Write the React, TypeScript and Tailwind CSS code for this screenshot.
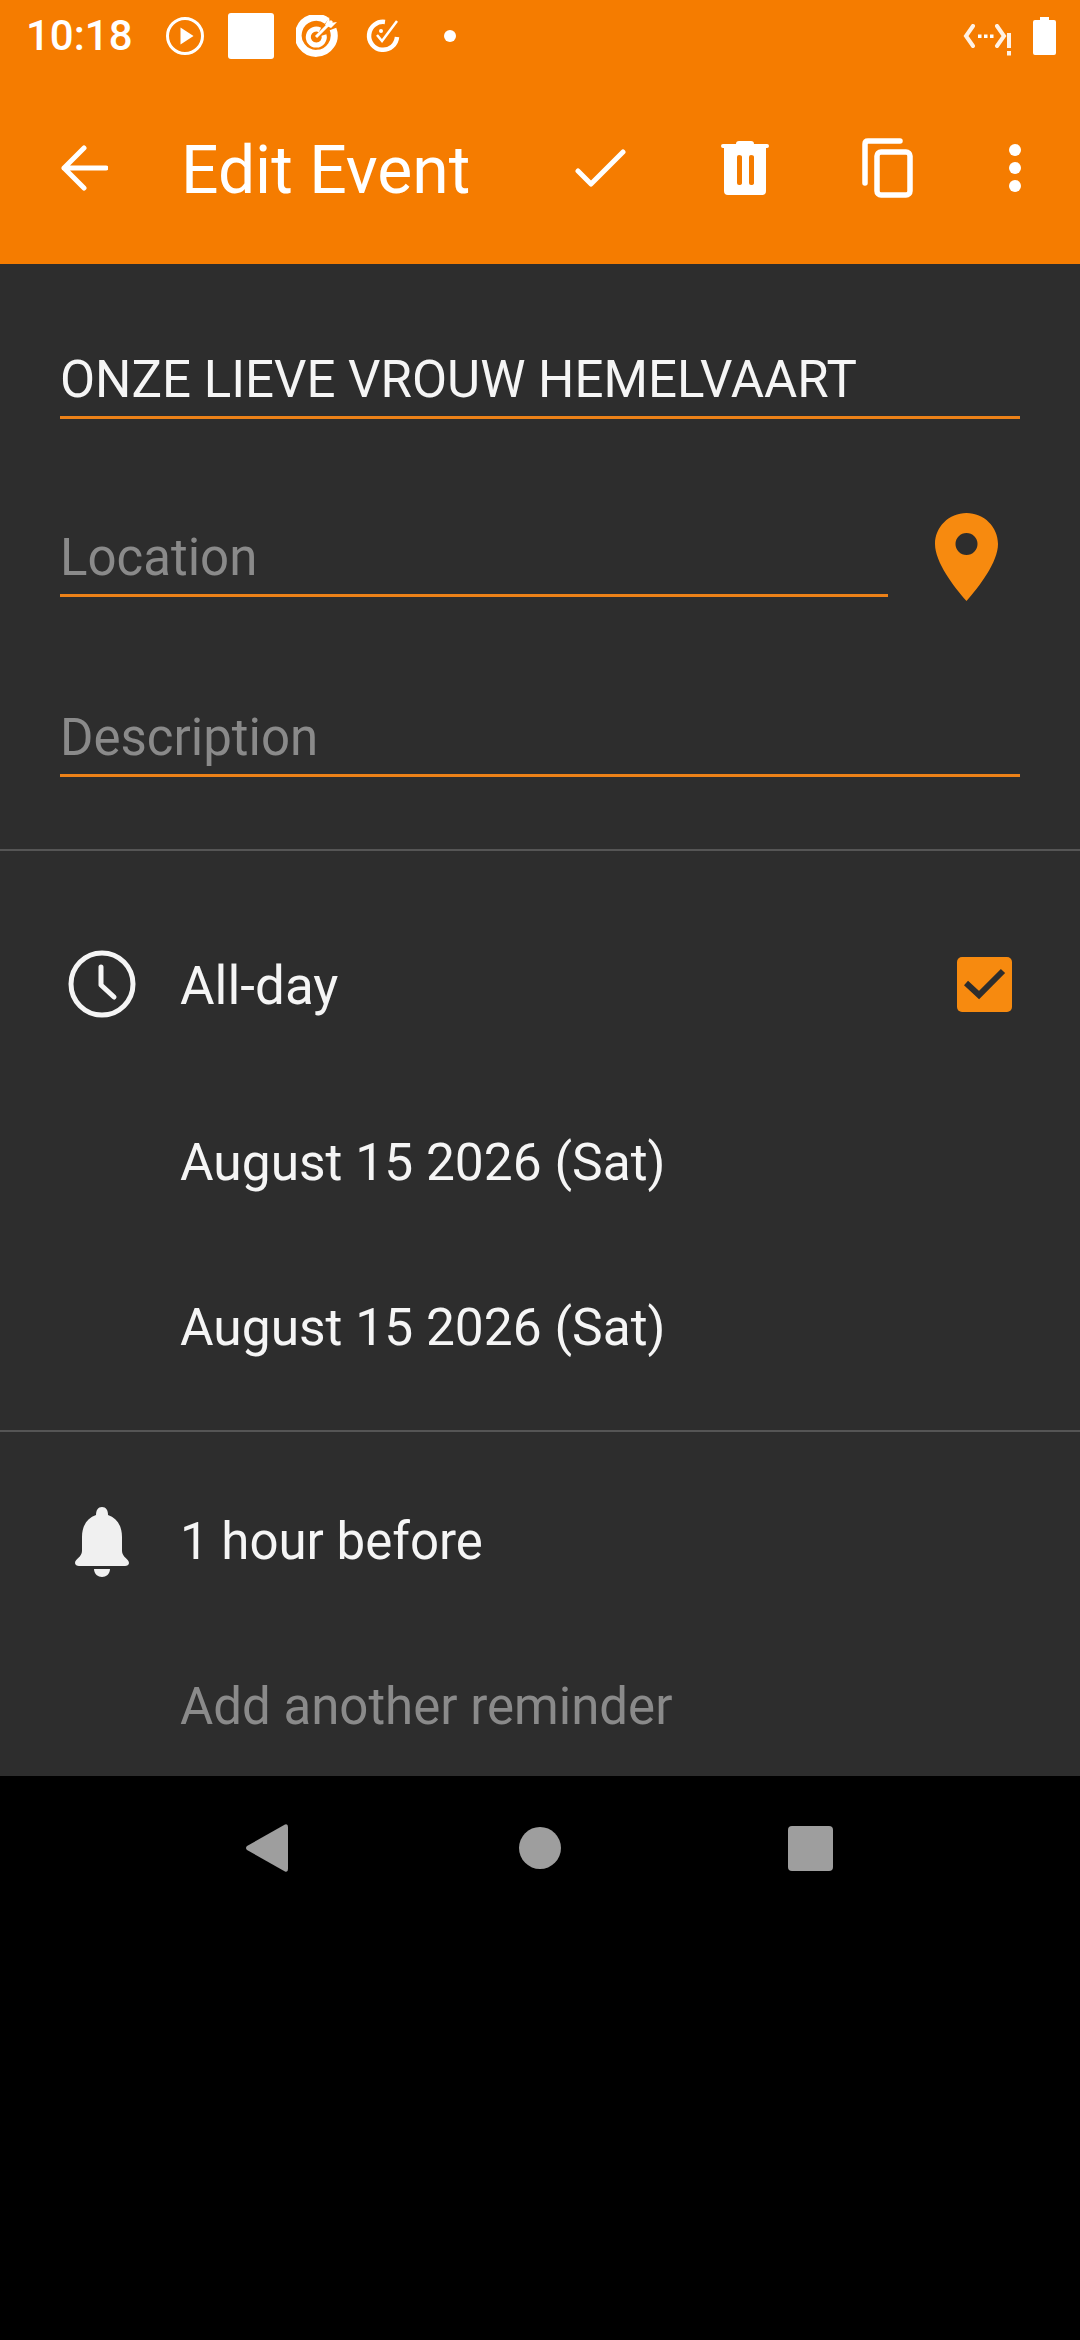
/** Edit Event screen, dark theme with orange toolbar. */
function StatusBar() {
  return (
    <div className="flex h-[72px] items-center pl-[26px] pr-[24px]">
      <span className="w-[140px] text-[42px] font-medium leading-none">10:18</span>
      <svg className="h-[38px] w-[38px]" viewBox="0 0 38 38">
        <circle cx="19" cy="19" r="17.5" fill="none" stroke="white" strokeWidth="3" />
        <path d="M14.5 10.5 L27.5 19 L14.5 27.5 Z" fill="white" />
      </svg>
      <div className="ml-[24px] h-[46px] w-[46px] rounded-[3px] bg-white" />
      <svg className="ml-[22px] h-[42px] w-[42px]" viewBox="0 0 42 42">
        <path d="M31 6 A18 18 0 1 0 37 14" fill="none" stroke="white" strokeWidth="7" />
        <path d="M24 15 A8 8 0 1 0 28 20" fill="none" stroke="white" strokeWidth="5" />
        <path d="M20 22 L36 6" stroke="white" strokeWidth="3" />
        <path d="M33 2 L34 8 L41 7 L35 13 L29 10 Z" fill="white" />
      </svg>
      <svg className="ml-[28px] h-[36px] w-[34px]" viewBox="0 0 34 36">
        <path d="M19 4 A14 14 0 1 0 31 19" fill="none" stroke="white" strokeWidth="4.5" />
        <path d="M11 17 L16 23 L31 3" fill="none" stroke="white" strokeWidth="2.5" />
        <circle cx="15" cy="13" r="2" fill="white" />
      </svg>
      <div className="ml-[44px] h-[12px] w-[12px] rounded-full bg-white" />
      <svg className="ml-auto mt-[8px] h-[32px] w-[50px]" viewBox="0 0 50 32">
        <path d="M10 2 L3 12 L10 22 M34 2 L41 12 L34 22" fill="none" stroke="white" strokeWidth="4" strokeLinecap="round" opacity="0.9" />
        <path d="M15 10.5 h3.5 v3.5 h-3.5 Z M21 10.5 h3.5 v3.5 h-3.5 Z M27 10.5 h3.5 v3.5 h-3.5 Z" fill="white" />
        <path d="M44 9 h4 v15 h-4 Z M44 27 h4 v4.5 h-4 Z" fill="white" opacity="0.9" />
      </svg>
      <svg className="ml-[20px] h-[38px] w-[23px]" viewBox="0 0 23 38">
        <path d="M7 0 h9 v3 h5 a2 2 0 0 1 2 2 v31 a2 2 0 0 1 -2 2 h-19 a2 2 0 0 1 -2 -2 v-31 a2 2 0 0 1 2 -2 h5 Z" fill="white" />
      </svg>
    </div>
  );
}

function Toolbar() {
  return (
    <div className="flex h-[192px] items-center">
      <svg className="ml-[60px] h-[46px] w-[48px]" viewBox="0 0 48 46" fill="none" stroke="white" strokeWidth="5" strokeLinecap="round" strokeLinejoin="round">
        <path d="M46 23 H4 M24 3 L4 23 L24 43" />
      </svg>
      <span className="ml-[73px] w-[394px] pt-[6px] text-[66px] leading-none">Edit Event</span>
      <svg className="h-[38px] w-[51px]" viewBox="0 0 51 38" fill="none" stroke="white" strokeWidth="5" strokeLinecap="round" strokeLinejoin="round">
        <path d="M3 22 L16 35 L48 3" />
      </svg>
      <svg className="ml-[95px] h-[54px] w-[48px]" viewBox="0 0 48 54">
        <path d="M15 3 Q15 0 18 0 H30 Q33 0 33 3 H46 Q48 3 48 5 Q48 7 46 7 H2 Q0 7 0 5 Q0 3 2 3 Z" fill="white" />
        <path fillRule="evenodd" fill="white" d="M3 7 H45 V50 Q45 54 41 54 H7 Q3 54 3 50 Z M16 16 Q16 14 18 14 Q21 14 21 16 V42 Q21 44 18 44 Q16 44 16 42 Z M28 16 Q28 14 30 14 Q33 14 33 16 V42 Q33 44 30 44 Q28 44 28 42 Z" />
      </svg>
      <svg className="ml-[93px] h-[60px] w-[51px]" viewBox="0 0 51 60" fill="none" stroke="white" strokeWidth="5.5" strokeLinecap="round">
        <path d="M3 45 V6 Q3 3 6 3 H38" />
        <rect x="15" y="14" width="33" height="43" rx="4" />
      </svg>
      <div className="ml-[96px] flex flex-col gap-[6px]">
        <div className="h-[12px] w-[12px] rounded-full bg-white" />
        <div className="h-[12px] w-[12px] rounded-full bg-white" />
        <div className="h-[12px] w-[12px] rounded-full bg-white" />
      </div>
    </div>
  );
}

function Field({ text, placeholder, className }: { text: string; placeholder?: boolean; className: string }) {
  return (
    <div className={`flex h-[72px] items-center border-b-[3px] border-[#ec8118] pb-[2px] text-[51px] ${placeholder ? 'text-[#8a8a8a]' : ''} ${className}`}>
      {text}
    </div>
  );
}

function Divider() {
  return <div className="h-[2px] bg-[#555555]" />;
}

export default function App() {
  return (
    <div className="h-[2340px] w-[1080px] overflow-hidden bg-black font-['Roboto',sans-serif] text-[#f5f5f5]">
      <div className="h-[264px] bg-[#f57c00] text-white">
        <StatusBar />
        <Toolbar />
      </div>

      <div className="h-[1512px] bg-[#2d2d2d]">
        <div className="px-[60px] pt-[83px]">
          <Field text="ONZE LIEVE VROUW HEMELVAART" className="w-[960px]" />
          <div className="mt-[106px] flex items-start">
            <Field text="Location" placeholder className="w-[828px]" />
            <svg className="ml-[47px] mt-[-12px] h-[88px] w-[63px]" viewBox="0 0 63 88">
              <path fillRule="evenodd" fill="#f78a0f" d="M31.5 0 C49 0 63 14 63 31 C63 49 44 74 31.5 88 C19 74 0 49 0 31 C0 14 14 0 31.5 0 Z M31.5 20 A11 11 0 1 0 31.5 42 A11 11 0 1 0 31.5 20 Z" />
            </svg>
          </div>
          <Field text="Description" placeholder className="mt-[104px] w-[960px]" />
        </div>

        <div className="mt-[72px]">
          <Divider />
        </div>

        <div className="mt-[66px] flex h-[134px] items-center pl-[68px] pr-[68px]">
          <svg className="h-[68px] w-[68px]" viewBox="0 0 68 68" fill="none" stroke="#f5f5f5" strokeWidth="5" strokeLinecap="round" strokeLinejoin="round">
            <circle cx="34" cy="34" r="31" />
            <path d="M33 17 V35 L46 47" />
          </svg>
          <span className="ml-[44px] pt-[5px] text-[53px]">All-day</span>
          <div className="ml-auto flex h-[55px] w-[55px] items-center justify-center rounded-[5px] bg-[#f78a0f]">
            <svg className="h-[32px] w-[42px]" viewBox="0 0 42 32" fill="none" stroke="#2d2d2d" strokeWidth="6">
              <path d="M2 15 L15 27 L39 3" />
            </svg>
          </div>
        </div>
        <div className="mt-[76px] flex h-[72px] items-center pl-[180px] text-[51.5px]">August 15 2026 (Sat)</div>
        <div className="mt-[93px] flex h-[72px] items-center pl-[180px] text-[51.5px]">August 15 2026 (Sat)</div>

        <div className="mt-[66px]">
          <Divider />
        </div>

        <div className="mt-[74px] flex h-[72px] items-center pl-[75px] text-[51px]">
          <svg className="h-[70px] w-[54px]" viewBox="0 0 54 70" fill="#f0f0f0">
            <path d="M27 0 C31 0 33 3 33 8 C42 11 47 19 47 30 V44 C47 50 54 52 54 56 C54 58 52 59 50 59 H4 C2 59 0 58 0 56 C0 52 7 50 7 44 V30 C7 19 12 11 21 8 C21 3 23 0 27 0 Z" />
            <path d="M19 62 H35 C35 67 31 70 27 70 C23 70 19 67 19 62 Z" />
          </svg>
          <span className="ml-[51px]">1 hour before</span>
        </div>
        <div className="mt-[93px] flex h-[72px] items-center pl-[180px] text-[51px] text-[#8a8a8a]">Add another reminder</div>
      </div>

      <div className="flex h-[144px] items-center pl-[246px]">
        <svg className="h-[48px] w-[42px]" viewBox="0 0 42 48">
          <path d="M39 0.5 Q42 -0.5 42 3 V45 Q42 48.5 39 47.5 L1 26 Q-1 24 1 22 Z" fill="#9e9e9e" />
        </svg>
        <div className="ml-[231px] h-[42px] w-[42px] rounded-full bg-[#9e9e9e]" />
        <div className="ml-[227px] h-[45px] w-[45px] rounded-[4px] bg-[#9e9e9e]" />
      </div>
    </div>
  );
}
